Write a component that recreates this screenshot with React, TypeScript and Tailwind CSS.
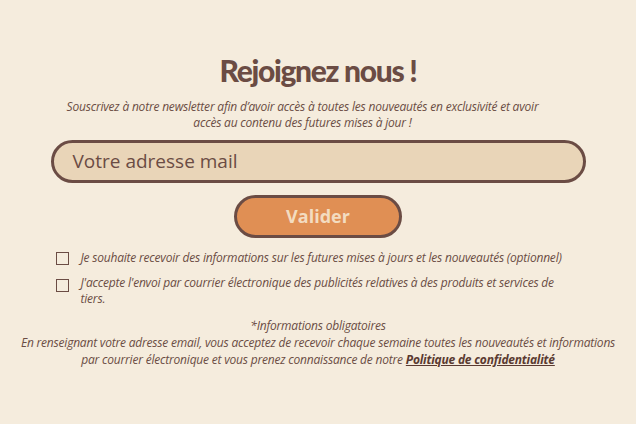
export default function App() {
  return (
    <div className="w-[636px] h-[424px] bg-[#f5ecdd] flex flex-col items-center text-[#6b4c44] font-['Open_Sans',sans-serif]">
      <h1 className="mt-[52px] text-[30px] leading-[36px] font-black tracking-[-1.3px] font-['Lato',sans-serif]">
        Rejoignez nous !
      </h1>
      <p className="mt-[11px] mr-[31px] w-[484px] text-center italic text-[12px] leading-[16px] tracking-[-0.2px]">
        Souscrivez à notre newsletter afin d’avoir accès à toutes les nouveautés en exclusivité et avoir
        accès au contenu des futures mises à jour !
      </p>
      <div className="mt-[9px] w-[535px] h-[43px] rounded-full border-[3px] border-[#6b4c44] bg-[#e9d5b8] flex items-center pl-[19px] text-[19px]">
        Votre adresse mail
      </div>
      <button className="mt-[12px] w-[168px] h-[43px] rounded-full border-[3px] border-[#6b4c44] bg-[#e08f54] text-[#f3dcc0] font-bold text-[18px]">
        Valider
      </button>
      <div className="mt-[12px] w-[525px] flex flex-col gap-[9px] italic text-[12px] leading-[16px] tracking-[-0.2px]">
        <label className="flex items-start gap-[12px]">
          <span className="mt-[2px] w-[13px] h-[13px] border border-[#6b4c44] shrink-0" />
          <span className="whitespace-nowrap">Je souhaite recevoir des informations sur les futures mises à jours et les nouveautés (optionnel)</span>
        </label>
        <label className="flex items-start gap-[12px]">
          <span className="mt-[4px] w-[13px] h-[13px] border border-[#6b4c44] shrink-0" />
          <span className="w-[480px]">
            J'accepte l'envoi par courrier électronique des publicités relatives à des produits et services de tiers.
          </span>
        </label>
      </div>
      <p className="mt-[10px] italic text-[12px] leading-[17px] tracking-[-0.2px]">*Informations obligatoires</p>
      <p className="w-[604px] text-center italic text-[12px] leading-[17px] tracking-[-0.2px]">
        En renseignant votre adresse email, vous acceptez de recevoir chaque semaine toutes les nouveautés et informations
        par courrier électronique et vous prenez connaissance de notre{' '}
        <a className="font-bold underline text-[#5a3a31]">Politique de confidentialité</a>
      </p>
    </div>
  )
}
